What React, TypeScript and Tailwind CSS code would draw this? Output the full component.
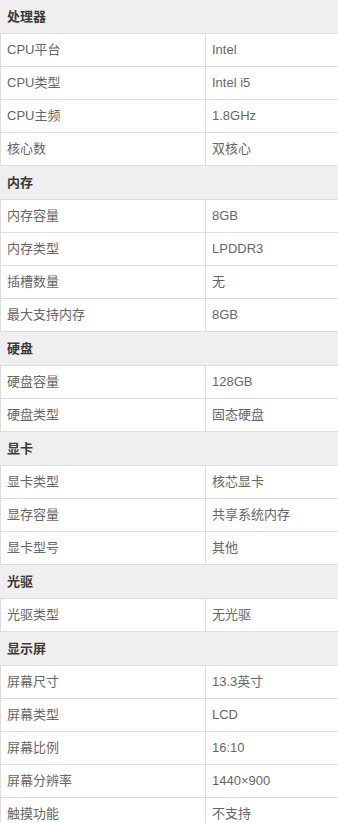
const specs: { title: string; rows: [string, string][] }[] = [
  {
    title: "处理器",
    rows: [
      ["CPU平台", "Intel"],
      ["CPU类型", "Intel i5"],
      ["CPU主频", "1.8GHz"],
      ["核心数", "双核心"],
    ],
  },
  {
    title: "内存",
    rows: [
      ["内存容量", "8GB"],
      ["内存类型", "LPDDR3"],
      ["插槽数量", "无"],
      ["最大支持内存", "8GB"],
    ],
  },
  {
    title: "硬盘",
    rows: [
      ["硬盘容量", "128GB"],
      ["硬盘类型", "固态硬盘"],
    ],
  },
  {
    title: "显卡",
    rows: [
      ["显卡类型", "核芯显卡"],
      ["显存容量", "共享系统内存"],
      ["显卡型号", "其他"],
    ],
  },
  {
    title: "光驱",
    rows: [["光驱类型", "无光驱"]],
  },
  {
    title: "显示屏",
    rows: [
      ["屏幕尺寸", "13.3英寸"],
      ["屏幕类型", "LCD"],
      ["屏幕比例", "16:10"],
      ["屏幕分辨率", "1440×900"],
      ["触摸功能", "不支持"],
    ],
  },
];

export default function App() {
  return (
    <div className="w-[338px] h-[823px] overflow-hidden bg-white text-[13px] font-['Liberation_Sans','Noto_Sans_CJK_SC',sans-serif]">
      {specs.map((s) => (
        <div key={s.title}>
          {/* section header */}
          <div className="h-[34px] flex items-center px-[7px] bg-[#efefef] border-b border-[#dddddd] font-bold text-[#3a3a3a]">
            {s.title}
          </div>
          {s.rows.map(([k, v]) => (
            <div key={k} className="h-[33px] flex border-b border-l border-[#dddddd] text-[#666]">
              <div className="w-[205px] shrink-0 flex items-center pl-[6px] border-r border-[#dddddd]">{k}</div>
              <div className="flex-1 flex items-center pl-[6px]">{v}</div>
            </div>
          ))}
        </div>
      ))}
    </div>
  );
}
